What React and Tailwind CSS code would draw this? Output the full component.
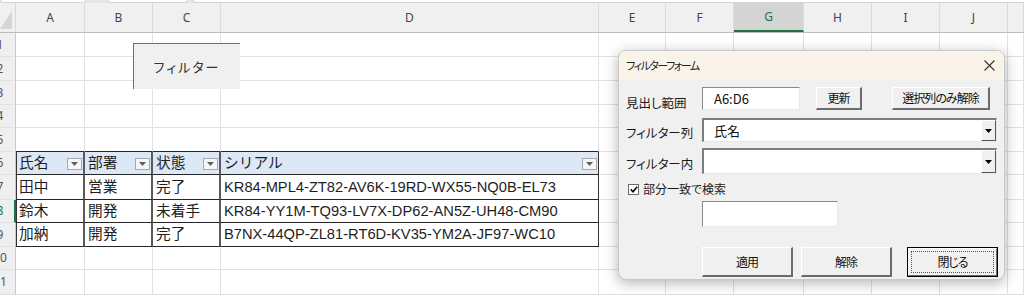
import React from 'react';

const COLS = [
  { k: 'A', w: 'w-[69px]' },
  { k: 'B', w: 'w-[68px]' },
  { k: 'C', w: 'w-[68px]' },
  { k: 'D', w: 'w-[378px]' },
  { k: 'E', w: 'w-[67px]' },
  { k: 'F', w: 'w-[68px]' },
  { k: 'G', w: 'w-[70px]' },
  { k: 'H', w: 'w-[68px]' },
  { k: 'I', w: 'w-[68px]' },
  { k: 'J', w: 'w-[68px]' },
  { k: '', w: 'flex-1' },
];

const ROWS = [
  { n: 1, h: 'h-[24px]' },
  { n: 2, h: 'h-[24px]' },
  { n: 3, h: 'h-[24px]' },
  { n: 4, h: 'h-[23px]' },
  { n: 5, h: 'h-[24px]' },
  { n: 6, h: 'h-[23px]' },
  { n: 7, h: 'h-[25px]' },
  { n: 8, h: 'h-[23px]' },
  { n: 9, h: 'h-[24px]' },
  { n: 10, h: 'h-[23px]' },
  { n: 11, h: 'h-[25px]' },
];

const TABLE = {
  6: ['氏名', '部署', '状態', 'シリアル'],
  7: ['田中', '営業', '完了', 'KR84-MPL4-ZT82-AV6K-19RD-WX55-NQ0B-EL73'],
  8: ['鈴木', '開発', '未着手', 'KR84-YY1M-TQ93-LV7X-DP62-AN5Z-UH48-CM90'],
  9: ['加納', '開発', '完了', 'B7NX-44QP-ZL81-RT6D-KV35-YM2A-JF97-WC10'],
};

const cellFont = { fontFamily: '"Liberation Sans", "Noto Sans CJK JP", sans-serif' };
const uiFont = { fontFamily: '"Noto Sans CJK JP", "Liberation Sans", sans-serif', fontFeatureSettings: '"palt"' };

function Caret({ color = '#000' }) {
  return (
    <svg width="7" height="4" viewBox="0 0 7 4">
      <path d="M0 0h7L3.5 4z" fill={color} />
    </svg>
  );
}

function FilterButton() {
  return (
    <div className="mr-[1px] mt-[2px] flex h-[12px] w-[15px] shrink-0 items-center justify-center border border-[#a9a9a9] bg-[#f6f6f6]">
      <Caret color="#606060" />
    </div>
  );
}

function Cell({ row, col, idx }) {
  const inTable = TABLE[row] && idx < 4;
  const isHead = row === 6 && idx < 4;
  let cls = `${col.w} shrink-0 border-r border-b border-[#e1e1e1] flex items-center overflow-hidden`;
  if (row === 5 && idx < 4) cls += ' border-b-[#262626]';
  if (inTable) {
    cls += ' border-b-[#262626]';
    cls += idx < 3 ? ' border-r-2 border-r-[#5a5a5a]' : ' border-r-[#333]';
    if (idx === 0) cls += ' shadow-[inset_1px_0_0_#333]';
  }
  if (isHead) cls += ' bg-[#dde8f6]';
  return (
    <div className={cls}>
      {inTable && (
        <div className="flex w-full items-center justify-between pl-[3px] text-[14.7px] text-[#1e1e1e]" style={cellFont}>
          <span className="whitespace-nowrap leading-none">{TABLE[row][idx]}</span>
          {isHead && <FilterButton />}
        </div>
      )}
    </div>
  );
}

function RowHeader({ n }) {
  const sel = n === 8;
  return (
    <div
      className={`w-4 shrink-0 overflow-hidden border-b border-[#e1e1e1] bg-[#efefef] flex items-center ${
        sel ? 'border-r-2 border-r-[#1e7145]' : 'border-r border-r-[#c9c9c9]'
      }`}
    >
      <div className={`-ml-4 w-8 shrink-0 text-center text-[12px] ${sel ? 'text-[#1e7145]' : 'text-[#555]'}`} style={{ fontFamily: '"Noto Sans", sans-serif' }}>
        {n}
      </div>
    </div>
  );
}

function Sheet() {
  return (
    <div className="flex flex-col">
      <div className="flex h-[3px] bg-[#e6e6e6]">
        <div className="w-[86px] rounded-b-[3px] border-x border-b border-[#d4d4d4] bg-white" />
        <div className="w-[22px]" />
        <div className="w-[80px] rounded-b-[3px] border-x border-b border-[#d4d4d4] bg-white" />
        <div className="w-[5px]" />
        <div className="flex-1 rounded-bl-[3px] border-l border-b border-[#d4d4d4] bg-white" />
      </div>
      <div className="flex h-[30px] border-b border-[#bdbdbd] bg-[#f0f0f0]">
        <div className="flex w-4 shrink-0 items-end justify-start border-r border-[#d8d8d8] pb-[3px]">
          <svg width="12" height="18" viewBox="0 0 12 18">
            <path d="M12 0V18H0z" fill="#d5d5d5" />
          </svg>
        </div>
        {COLS.map((c) => (
          <div
            key={c.k || 'z'}
            className={`${c.w} shrink-0 flex items-center justify-center border-r border-[#dcdcdc] text-[12px] ${
              c.k === 'G' ? 'bg-[#d4d4d4] text-[#1e7145] border-b-2 border-b-[#1e7145]' : 'text-[#454545]'
            }`}
            style={{ fontFamily: '"Noto Sans", sans-serif' }}
          >
            {c.k}
          </div>
        ))}
      </div>
      {ROWS.map((r) => (
        <div key={r.n} className={`flex ${r.h}`}>
          <RowHeader n={r.n} />
          {COLS.map((c, i) => (
            <Cell key={c.k || 'z'} row={r.n} col={c} idx={i} />
          ))}
        </div>
      ))}
    </div>
  );
}

function Btn({ children, className = '', focused = false }) {
  if (focused) {
    return (
      <div className={`border border-black bg-[#f0f0f0] ${className}`}>
        <div className="flex h-full w-full items-center justify-center border-t border-l border-t-white border-l-white border-r border-b border-r-[#6b6b6b] border-b-[#6b6b6b] p-[2px]">
          <div className="flex h-full w-full items-center justify-center border border-dotted border-[#555] text-[12px] tracking-[-1px] text-[#111]">
            {children}
          </div>
        </div>
      </div>
    );
  }
  return (
    <div
      className={`flex items-center justify-center border-t border-l border-t-white border-l-white border-r-2 border-b-2 border-r-[#6b6b6b] border-b-[#6b6b6b] bg-[#f0f0f0] text-[12px] tracking-[-1px] text-[#111] ${className}`}
    >
      {children}
    </div>
  );
}

function TextBox({ className = '', children }) {
  return (
    <div className={`flex items-center border-t border-l border-t-[#8a8a8a] border-l-[#8a8a8a] border-r border-b border-r-[#e8e8e8] border-b-[#e8e8e8] bg-white pl-[11px] text-[13px] text-[#111] ${className}`}>
      {children}
    </div>
  );
}

function Combo({ className = '', value }) {
  return (
    <div className={`flex border-t-2 border-l-2 border-t-[#7d7d7d] border-l-[#7d7d7d] border-r border-b border-r-[#e6e6e6] border-b-[#e6e6e6] bg-white ${className}`}>
      <div className="flex flex-1 items-center pl-[10px] text-[13px] text-[#111]">{value}</div>
      <div className="flex w-[15px] items-center justify-center border-t border-l border-t-white border-l-white border-r border-b border-r-[#555] border-b-[#555] bg-[#f0f0f0]">
        <Caret />
      </div>
    </div>
  );
}

function FilterDialog() {
  return (
    <div
      className="absolute left-[618px] top-[50px] flex h-[230px] w-[387px] flex-col overflow-hidden rounded-[8px] border border-[#c9c9c9] bg-[#f0f0f0] shadow-[0_3px_14px_rgba(0,0,0,0.3)]"
      style={uiFont}
    >
      <div className="flex h-[29px] shrink-0 items-center justify-between bg-[#faf3ea] pl-[7px] pr-[9px]">
        <span className="text-[11px] tracking-[-1.5px] text-[#222]">フィルターフォーム</span>
        <svg width="11" height="11" viewBox="0 0 11 11">
          <path d="M0.5 0.5l10 10M10.5 0.5l-10 10" stroke="#333" strokeWidth="1.1" />
        </svg>
      </div>
      <div className="flex flex-col pl-[7px] text-[12.5px] text-[#1a1a1a]">
        <div className="mt-[7px] flex h-[23px]">
          <div className="w-[76px] pt-[8px] leading-[15px]">見出し範囲</div>
          <TextBox className="h-[23px] w-[98px]">A6:D6</TextBox>
          <Btn className="ml-[16px] h-[23px] w-[46px]">更新</Btn>
          <Btn className="ml-[30px] h-[23px] w-[98px]">選択列のみ解除</Btn>
        </div>
        <div className="mt-[8px] flex h-[24px]">
          <div className="w-[76px] pt-[7px] leading-[15px]">フィルター列</div>
          <Combo className="h-[24px] w-[295px]" value="氏名" />
        </div>
        <div className="mt-[6px] flex h-[26px]">
          <div className="w-[76px] pt-[8px] leading-[15px]">フィルター内</div>
          <Combo className="h-[26px] w-[295px]" value="" />
        </div>
        <div className="mt-[9px] flex h-[12px] items-center">
          <div className="ml-[2px] flex h-[11px] w-[11px] items-center justify-center border border-[#6d6d6d] bg-white">
            <svg width="8" height="7" viewBox="0 0 8 7">
              <path d="M0.8 3.4l2.2 2.3L7.2 0.8" stroke="#000" strokeWidth="1.6" fill="none" />
            </svg>
          </div>
          <span className="ml-[4px] text-[12px] leading-none">部分一致で検索</span>
        </div>
        <div className="mt-[6px] flex">
          <TextBox className="ml-[76px] h-[26px] w-[136px]" />
        </div>
        <div className="mt-[20px] flex">
          <Btn className="ml-[76px] h-[30px] w-[91px]">適用</Btn>
          <Btn className="ml-[8px] h-[30px] w-[91px]">解除</Btn>
          <Btn focused className="ml-[15px] h-[30px] w-[91px]">閉じる</Btn>
        </div>
      </div>
    </div>
  );
}

export default function App() {
  return (
    <div className="relative h-[296px] w-[1024px] overflow-hidden bg-white">
      <Sheet />
      {/* shape button placed on the sheet */}
      <div
        className="absolute left-[133px] top-[43px] flex h-[46px] w-[107px] items-center justify-center border-t border-l border-[#6f6f6f] bg-[#f0f0f0] text-[13px] tracking-[2px] text-[#333]"
        style={uiFont}
      >
        フィルター
      </div>
      <FilterDialog />
    </div>
  );
}
